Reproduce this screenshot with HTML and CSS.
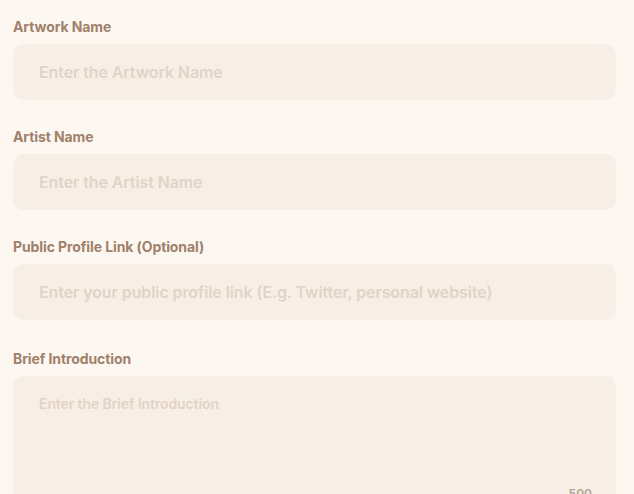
FILE: index.html
```html
<!DOCTYPE html>
<html lang="en">
<head>
<meta charset="utf-8">
<link rel="stylesheet" href="styles.css">
</head>
<body>
<form class="form">
  <div class="field">
    <label class="label">Artwork Name</label>
    <input class="input" type="text" placeholder="Enter the Artwork Name">
  </div>
  <div class="field">
    <label class="label">Artist Name</label>
    <input class="input" type="text" placeholder="Enter the Artist Name">
  </div>
  <div class="field">
    <label class="label">Public Profile Link (Optional)</label>
    <input class="input" type="text" placeholder="Enter your public profile link (E.g. Twitter, personal website)">
  </div>
  <div class="field field-last">
    <label class="label">Brief Introduction</label>
    <div class="area-wrap">
      <textarea class="area" placeholder="Enter the Brief Introduction"></textarea>
      <span class="count">500</span>
    </div>
  </div>
</form>
</body>
</html>
```
FILE: styles.css
```css
html, body {
  margin: 0;
  padding: 0;
  background: #fcf8f1;
  font-family: Inter, "Noto Sans", sans-serif;
}
.form {
  display: flex;
  flex-direction: column;
  gap: 27px;
  padding: 17px 18px 0 13px;
}
.field {
  display: flex;
  flex-direction: column;
  gap: 7px;
}
.field-last {
  margin-top: 2px;
}
.label {
  font-size: 14px;
  line-height: 20px;
  font-weight: 700;
  color: #a1806b;
  letter-spacing: -0.1px;
}
.input, .area {
  box-sizing: border-box;
  width: 100%;
  border: none;
  outline: none;
  background: #f7efe6;
  border-radius: 10px;
  font-family: Inter, "Noto Sans", sans-serif;
  color: #8a6a55;
}
.input {
  height: 56px;
  padding: 0 26px;
  font-size: 16px;
  font-weight: 600;
  letter-spacing: -0.1px;
}
.input::placeholder, .area::placeholder {
  color: #e3d3c6;
  opacity: 1;
}
.area-wrap {
  position: relative;
}
.area {
  display: block;
  height: 150px;
  padding: 19px 26px;
  font-size: 14px;
  font-weight: 600;
  letter-spacing: -0.1px;
  resize: none;
}
.count {
  position: absolute;
  right: 24px;
  top: 110px;
  font-size: 12px;
  font-weight: 600;
  color: #b3a093;
}
```
